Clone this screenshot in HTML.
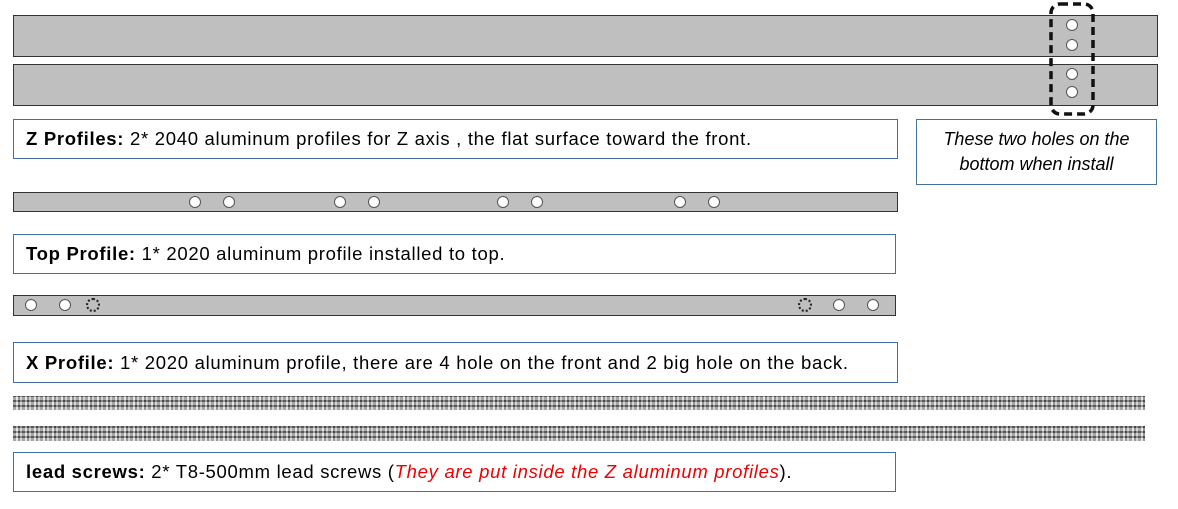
<!DOCTYPE html>
<html><head><style>
body{margin:0;width:1178px;height:509px;background:#fff;position:relative;overflow:hidden;font-family:"Liberation Sans",sans-serif;}
.a{position:absolute;box-sizing:border-box}
.bar{background:#bfbfbf;border:1.5px solid #333}
.box{border:1.5px solid #41719c;background:#fff;font-size:18.5px;letter-spacing:0.7px;color:#000;padding-left:12px;display:flex;align-items:center;white-space:nowrap}
.h{position:absolute;width:12px;height:12px;border:1.5px solid #555;border-radius:50%;background:#fff;box-sizing:border-box}
.d{position:absolute;width:14px;height:14px;border:2px dotted #222;border-radius:50%;box-sizing:border-box}
.sc{background:repeating-linear-gradient(90deg,#777 0 3px,#d8d8d8 3px 5px,#5e5e5e 5px 7px,#bdbdbd 7px 9px),#999}
.sc:after{content:"";position:absolute;inset:0;background:repeating-linear-gradient(0deg,rgba(255,255,255,.35) 0 3px,rgba(0,0,0,.25) 3px 5px)}
</style></head><body>
<div class="a bar" style="left:13px;top:15px;width:1145px;height:42px"></div>
<div class="a bar" style="left:13px;top:64px;width:1145px;height:42px"></div>
<svg class="a" style="left:1048px;top:1px" width="49" height="117"><rect x="3" y="3" width="42" height="110" rx="9" fill="none" stroke="#111" stroke-width="3.5" stroke-dasharray="8,5"/></svg>
<div class="h" style="left:1066px;top:19px"></div>
<div class="h" style="left:1066px;top:39px"></div>
<div class="h" style="left:1066px;top:68px"></div>
<div class="h" style="left:1066px;top:86px"></div>

<div class="a box" style="left:13px;top:119px;width:885px;height:40px"><b>Z Profiles:</b>&nbsp;2* 2040 aluminum profiles for Z axis , the flat surface toward the front.</div>
<div class="a box" style="left:916px;top:119px;width:241px;height:66px;padding:0;justify-content:center;text-align:center;font-style:italic;line-height:25px;white-space:nowrap;letter-spacing:0;font-size:18px">These two holes on the<br>bottom when install</div>

<div class="a bar" style="left:13px;top:192px;width:885px;height:20px"></div>
<div class="h" style="left:189px;top:196px"></div><div class="h" style="left:223px;top:196px"></div>
<div class="h" style="left:334px;top:196px"></div><div class="h" style="left:368px;top:196px"></div>
<div class="h" style="left:497px;top:196px"></div><div class="h" style="left:531px;top:196px"></div>
<div class="h" style="left:674px;top:196px"></div><div class="h" style="left:708px;top:196px"></div>

<div class="a box" style="left:13px;top:234px;width:883px;height:40px"><b>Top Profile:</b>&nbsp;1* 2020 aluminum profile installed to top.</div>

<div class="a bar" style="left:13px;top:295px;width:883px;height:21px"></div>
<div class="h" style="left:25px;top:299px"></div><div class="h" style="left:59px;top:299px"></div>
<div class="d" style="left:86px;top:298px"></div>
<div class="d" style="left:798px;top:298px"></div>
<div class="h" style="left:833px;top:299px"></div><div class="h" style="left:867px;top:299px"></div>

<div class="a box" style="left:13px;top:342px;width:885px;height:41px"><b>X Profile:</b>&nbsp;1* 2020 aluminum profile, there are 4 hole on the front and 2 big hole on the back.</div>

<div class="a sc" style="left:13px;top:396px;width:1132px;height:14px"></div>
<div class="a sc" style="left:13px;top:426px;width:1132px;height:15px"></div>

<div class="a box" style="left:13px;top:452px;width:883px;height:40px"><b>lead screws:</b>&nbsp;2* T8-500mm lead screws (<i style="color:#e00">They are put inside the Z aluminum profiles</i>).</div>
</body></html>
